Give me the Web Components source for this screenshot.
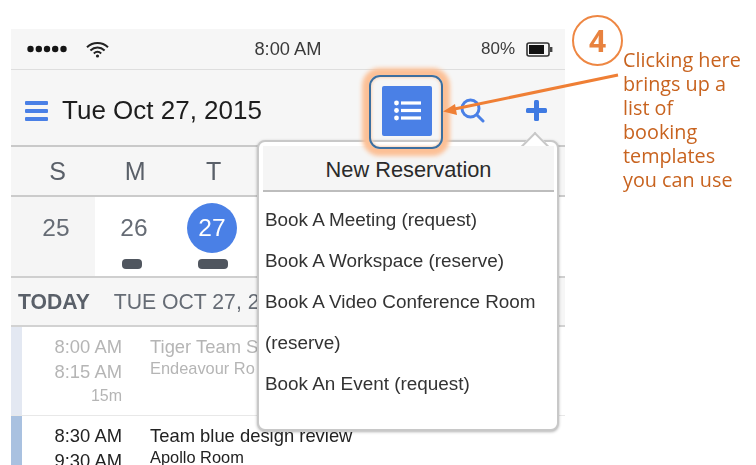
<!DOCTYPE html>
<html>
<head>
<meta charset="utf-8">
<title>New Reservation</title>
<style>
  html, body { margin: 0; background: #fff; }
  body { width: 756px; height: 465px; overflow: hidden; position: relative; font-family: "Liberation Sans", Arial, sans-serif; }
</style>
</head>
<body>
<phone-screen>
  <status-bar></status-bar>
  <app-nav title="Tue Oct 27, 2015"></app-nav>
  <week-strip></week-strip>
  <agenda-head></agenda-head>
  <agenda-event start="8:00 AM" end="8:15 AM" length="15m" name="Tiger Team S" room="Endeavour Ro" muted></agenda-event>
  <agenda-event start="8:30 AM" end="9:30 AM" name="Team blue design review" room="Apollo Room"></agenda-event>
</phone-screen>
<reservation-popover>
  <popover-item>Book A Meeting (request)</popover-item>
  <popover-item>Book A Workspace (reserve)</popover-item>
  <popover-item>Book A Video Conference Room (reserve)</popover-item>
  <popover-item>Book An Event (request)</popover-item>
</reservation-popover>
<callout-note step="4">Clicking here brings up a list of booking templates you can use</callout-note>

<script>
class PhoneScreen extends HTMLElement {
    connectedCallback() {
        this.attachShadow({ mode: 'open' });
        this.shadowRoot.innerHTML = `
            <style>
                :host {
                    display: flex;
                    flex-direction: column;
                    width: 554px;
                    height: 436px;
                    margin: 29px 0 0 11px;
                    background: #fff;
                    overflow: hidden;
                    filter: blur(0.45px);
                }
                ::slotted(*) { flex: none; }
            </style>
            <slot></slot>
        `;
    }
}

class StatusBar extends HTMLElement {
    connectedCallback() {
        this.attachShadow({ mode: 'open' });
        this.shadowRoot.innerHTML = `
            <style>
                :host {
                    display: grid;
                    grid-template-columns: 1fr auto 1fr;
                    align-items: center;
                    height: 41px;
                    box-sizing: border-box;
                    padding: 0 12px 0 16px;
                    background: #f6f6f6;
                    border-bottom: 1px solid #dedede;
                    color: #3a3a3a;
                    font-size: 18.3px;
                }
                .left, .right { display: flex; align-items: center; }
                .left { gap: 19px; }
                .right { justify-content: flex-end; gap: 11px; font-size: 17px; }
                .time { position: relative; left: -2px; }
            </style>
            <div class="left">
                <svg width="40" height="8" viewBox="0 0 40 8" fill="#151515">
                    <circle cx="3.5" cy="4" r="3.2"/><circle cx="11.8" cy="4" r="3.2"/><circle cx="20" cy="4" r="3.2"/><circle cx="28.2" cy="4" r="3.2"/><circle cx="36.5" cy="4" r="3.2"/>
                </svg>
                <svg width="23" height="17" viewBox="0 0 23 17" fill="none" stroke="#222" stroke-width="2">
                    <path d="M1 6.2C7 .6 16 .6 22 6.2"/><path d="M4.4 9.4C8.5 5.6 14.5 5.6 18.6 9.4"/><path d="M7.8 12.4C10 10.4 13 10.4 15.2 12.4"/>
                    <circle cx="11.5" cy="15" r="1.6" fill="#222" stroke="none"/>
                </svg>
            </div>
            <div class="time">8:00 AM</div>
            <div class="right">
                <span>80%</span>
                <svg width="27" height="15" viewBox="0 0 27 15">
                    <rect x="1" y="1" width="22" height="13" rx="2" fill="none" stroke="#333" stroke-width="1.6"/>
                    <rect x="3" y="3" width="15" height="9" fill="#111"/>
                    <rect x="24" y="5" width="2.4" height="5" fill="#444"/>
                </svg>
            </div>
        `;
    }
}

class AppNav extends HTMLElement {
    connectedCallback() {
        this.attachShadow({ mode: 'open' });
        this.shadowRoot.innerHTML = `
            <style>
                :host {
                    display: flex;
                    align-items: center;
                    height: 77px;
                    box-sizing: border-box;
                    padding: 6px 18px 0 14px;
                    background: #f6f6f6;
                    border-bottom: 2px solid #c9c9c9;
                    color: #1d1d1d;
                }
                .title { margin-left: 14px; font-size: 26px; flex: 1; }
                .list-btn {
                    display: flex;
                    align-items: center;
                    justify-content: center;
                    width: 50px;
                    height: 50px;
                    background: #4a80e6;
                    border-radius: 2px;
                }
                .search { margin-left: 28px; }
                .plus { margin-left: 41px; }
            </style>
            <svg width="23" height="20" viewBox="0 0 23 20" fill="#4a80e6">
                <rect width="23" height="4" rx="1"/><rect y="8" width="23" height="4" rx="1"/><rect y="16" width="23" height="4" rx="1"/>
            </svg>
            <span class="title">${this.getAttribute('title')}</span>
            <div class="list-btn">
                <svg width="27" height="21" viewBox="0 0 27 21" fill="#fff">
                    <circle cx="2.5" cy="3" r="2.4"/><circle cx="2.5" cy="10.5" r="2.4"/><circle cx="2.5" cy="18" r="2.4"/>
                    <rect x="7" y="1.4" width="20" height="3.2"/><rect x="7" y="8.9" width="20" height="3.2"/><rect x="7" y="16.4" width="20" height="3.2"/>
                </svg>
            </div>
            <svg class="search" width="25" height="25" viewBox="0 0 25 25" fill="none" stroke="#4a80e6" stroke-width="3">
                <circle cx="10.5" cy="10.5" r="8.5"/><path d="M17 17l6 6" stroke-linecap="round"/>
            </svg>
            <svg class="plus" width="21" height="21" viewBox="0 0 21 21" fill="#3f7ae2">
                <rect x="8" y="0" width="5" height="21" rx="1.5"/><rect x="0" y="8" width="21" height="5" rx="1.5"/>
            </svg>
        `;
    }
}

class WeekStrip extends HTMLElement {
    connectedCallback() {
        this.attachShadow({ mode: 'open' });
        this.shadowRoot.innerHTML = `
            <style>
                :host { display: block; color: #5a6069; }
                .row {
                    display: grid;
                    text-align: center;
                }
                .names {
                    grid-template-columns: 85px repeat(6, 78.5px);
                    height: 50px;
                    box-sizing: border-box;
                    background: #f6f6f6;
                    border-bottom: 2px solid #cbcbcb;
                    align-items: center;
                    font-size: 25px;
                }
                .names span:first-child { padding-left: 8px; }
                .days {
                    grid-template-columns: 84px repeat(6, 78px);
                    height: 81px;
                    box-sizing: border-box;
                    background: #fff;
                    border-bottom: 2px solid #cfcfcf;
                    font-size: 24.5px;
                }
                .cell { position: relative; padding-top: 17px; color: #666c75; }
                .days .cell:first-child { background: #f5f5f5; padding-left: 6px; }
                .today { color: #fff; }
                .today::before {
                    content: "";
                    position: absolute;
                    z-index: 0;
                    left: 14px;
                    top: 6px;
                    width: 50px;
                    height: 50px;
                    border-radius: 50%;
                    background: #4a80e6;
                }
                .today b { position: relative; font-weight: 400; color: #fff; }
                .dash {
                    position: absolute;
                    top: 62px;
                    height: 10px;
                    border-radius: 4px;
                    background: #50565f;
                }
            </style>
            <div class="row names"><span>S</span><span>M</span><span>T</span></div>
            <div class="row days">
                <div class="cell">25</div>
                <div class="cell">26<i class="dash" style="left:27px;width:20px"></i></div>
                <div class="cell today"><b>27</b><i class="dash" style="left:25px;width:30px"></i></div>
                <div class="cell"></div>
            </div>
        `;
    }
}

class AgendaHead extends HTMLElement {
    connectedCallback() {
        this.attachShadow({ mode: 'open' });
        this.shadowRoot.innerHTML = `
            <style>
                :host {
                    display: flex;
                    align-items: center;
                    gap: 24px;
                    height: 49px;
                    box-sizing: border-box;
                    padding: 0 0 0 7px;
                    background: #f6f6f6;
                    border-bottom: 2px solid #d2d2d2;
                    color: #666c75;
                    font-size: 21.2px;
                    white-space: nowrap;
                }
                b { color: #5a6069; }
            </style>
            <b>TODAY</b><span>TUE OCT 27, 2</span>
        `;
    }
}

class AgendaEvent extends HTMLElement {
    connectedCallback() {
        const muted = this.hasAttribute('muted');
        const length = this.getAttribute('length');
        this.attachShadow({ mode: 'open' });
        this.shadowRoot.innerHTML = `
            <style>
                :host {
                    display: grid;
                    grid-template-columns: 11px 100px 1fr;
                    height: 89px;
                    box-sizing: border-box;
                    border-bottom: 1px solid #e8e8e8;
                    color: ${muted ? '#b5b5b5' : '#222'};
                }
                .stripe { background: ${muted ? '#e3e8f2' : '#a9c1e0'}; }
                .times { text-align: right; font-size: 18.4px; line-height: 25px; padding-top: 7px; }
                .length { font-size: 16px; line-height: 24px; }
                .info { padding: 7px 0 0 28px; font-size: 18.4px; line-height: 25px; white-space: nowrap; }
                .room { font-size: 16.4px; line-height: 19px; }
            </style>
            <div class="stripe"></div>
            <div class="times">
                <div>${this.getAttribute('start')}</div>
                <div>${this.getAttribute('end')}</div>
                ${length ? `<div class="length">${length}</div>` : ''}
            </div>
            <div class="info">
                <div>${this.getAttribute('name')}</div>
                <div class="room">${this.getAttribute('room')}</div>
            </div>
        `;
    }
}

class ReservationPopover extends HTMLElement {
    connectedCallback() {
        this.attachShadow({ mode: 'open' });
        this.shadowRoot.innerHTML = `
            <style>
                :host {
                    position: absolute;
                    left: 257px;
                    top: 140px;
                    width: 302px;
                    height: 291px;
                    box-sizing: border-box;
                    display: flex;
                    flex-direction: column;
                    padding: 4px 3px 0 4px;
                    background: #fff;
                    border: 2px solid #c8c8c8;
                    border-radius: 8px;
                    box-shadow: 0 1px 3px rgba(0,0,0,0.3);
                    filter: blur(0.45px);
                    color: #2b2b2b;
                }
                .caret {
                    position: absolute;
                    right: 12px;
                    top: -6px;
                    width: 18px;
                    height: 18px;
                    background: #fff;
                    border: solid #c8c8c8;
                    border-width: 2px 0 0 2px;
                    transform: rotate(45deg);
                }
                .title {
                    position: relative;
                    height: 44px;
                    background: #f5f5f5;
                    border-bottom: 2px solid #bdbdbd;
                    text-align: center;
                    font-size: 21.8px;
                    line-height: 47px;
                }
                .items { padding: 7px 0 0 2px; }
            </style>
            <div class="caret"></div>
            <div class="title">New Reservation</div>
            <div class="items"><slot></slot></div>
        `;
    }
}

class PopoverItem extends HTMLElement {
    connectedCallback() {
        this.attachShadow({ mode: 'open' });
        this.shadowRoot.innerHTML = `
            <style>
                :host { display: block; font-size: 18.9px; line-height: 41px; width: 285px; color: #333; }
            </style>
            <slot></slot>
        `;
    }
}

class CalloutNote extends HTMLElement {
    connectedCallback() {
        this.attachShadow({ mode: 'open' });
        this.shadowRoot.innerHTML = `
            <style>
                :host { position: absolute; inset: 0; display: block; pointer-events: none; }
                .ring {
                    position: absolute;
                    left: 369px;
                    top: 75px;
                    width: 74px;
                    height: 74px;
                    box-sizing: border-box;
                    border: 2px solid #3d6f9f;
                    border-radius: 11px;
                    box-shadow: 0 0 4px 7px #fcc096, inset 0 0 3px 1px #fcd6ba;
                }
                .arrow { position: absolute; left: 0; top: 0; }
                .step {
                    position: absolute;
                    left: 572px;
                    top: 15px;
                    width: 51px;
                    height: 51px;
                    box-sizing: border-box;
                    display: flex;
                    align-items: center;
                    justify-content: center;
                    border: 2px solid #ee8743;
                    border-radius: 50%;
                    color: #e8823f;
                    font: 700 30px "Open Sans", sans-serif;
                }
                .text {
                    position: absolute;
                    left: 623px;
                    top: 48px;
                    width: 126px;
                    color: #c8631f;
                    font: 400 19.8px/24px "Open Sans", sans-serif;
                }
            </style>
            <div class="ring"></div>
            <svg class="arrow" width="756" height="465" viewBox="0 0 756 465">
                <path d="M618 75L452 109.5" stroke="#ef7f35" stroke-width="3" fill="none"/>
                <path d="M443 111.5L455 104L457 115Z" fill="#ef7f35"/>
            </svg>
            <div class="step">${this.getAttribute('step')}</div>
            <div class="text"><slot></slot></div>
        `;
    }
}

customElements.define('phone-screen', PhoneScreen);
customElements.define('status-bar', StatusBar);
customElements.define('app-nav', AppNav);
customElements.define('week-strip', WeekStrip);
customElements.define('agenda-head', AgendaHead);
customElements.define('agenda-event', AgendaEvent);
customElements.define('reservation-popover', ReservationPopover);
customElements.define('popover-item', PopoverItem);
customElements.define('callout-note', CalloutNote);
</script>
</body>
</html>
